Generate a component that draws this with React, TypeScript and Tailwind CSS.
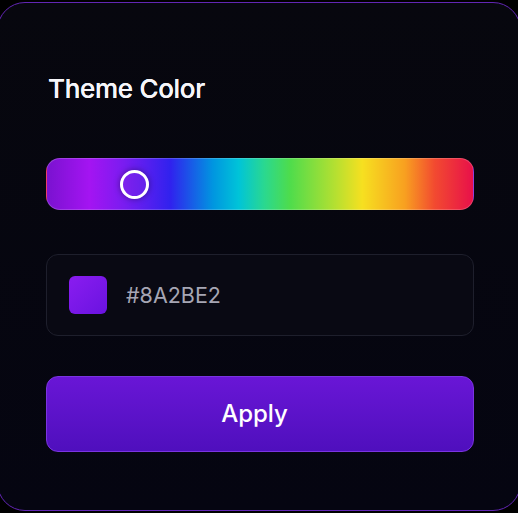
export default function App() {
  return (
    <div className="w-[518px] h-[513px] bg-black overflow-hidden" style={{ fontFamily: 'Inter, "Noto Sans", sans-serif' }}>
      <div className="ml-[-3px] mt-[2px] h-[509px] w-[524px] rounded-[28px] border border-[#6226b4] bg-gradient-to-b from-[#07070e] to-[#050511] pl-[48px] pr-[46px] pt-[69px]">
        <h2 className="pl-[2px] text-[26px] leading-[34px] font-medium text-[#f6f6fa] tracking-[-0.3px] [text-shadow:0_0_0.4px_#fff]">Theme Color</h2>
        <div
          className="relative mt-[52px] h-[52px] rounded-[14px] border border-[#ffffff30]"
          style={{
            background:
              'linear-gradient(90deg, #7a12d0 0%, #a414f2 10%, #7a1cf0 18%, #3022ee 29%, #0096e0 39%, #00c4d8 45%, #2ad890 51%, #4edc4c 57%, #b8e030 68%, #f6e020 74%, #f8a020 84%, #f24a30 91%, #e8104a 100%)',
          }}
        >
          <div className="absolute left-[73px] top-[11px] h-[29px] w-[29px] rounded-full border-[3px] border-white bg-[#8a2be240] shadow-[0_0_6px_rgba(0,0,0,0.4)]" />
        </div>
        <div className="mt-[44px] flex h-[82px] items-center rounded-[12px] border border-[#1e1f2c] bg-[#090913] pl-[22px]">
          <div className="h-[38px] w-[38px] rounded-[6px] bg-gradient-to-br from-[#8a1cf0] to-[#6a12e0]" />
          <span className="ml-[19px] text-[21.5px] text-[#a6a6b4]">#8A2BE2</span>
        </div>
        <button className="mt-[40px] flex h-[76px] w-full items-center justify-center rounded-[12px] border border-[#7a34e0] bg-gradient-to-b from-[#6916d6] to-[#4f0fbd] pr-[11px] text-[24px] font-medium text-white">
          Apply
        </button>
      </div>
    </div>
  );
}
